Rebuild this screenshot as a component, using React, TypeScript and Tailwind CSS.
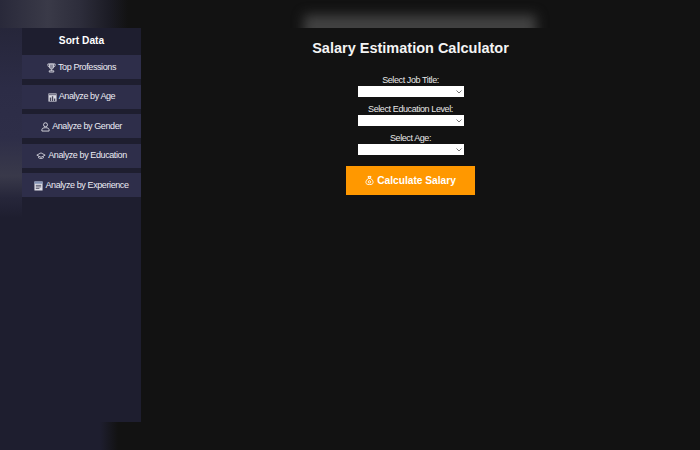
import React from "react";

const Trophy = () => (
  <svg width="9" height="10" viewBox="0 0 10 11" fill="none" stroke="#d4d4dc" strokeWidth="1" className="shrink-0">
    <path d="M1 1h8v1.600A1.600 1.600 0 0 1 7.400 4.200H2.600A1.600 1.600 0 0 1 1 2.600z" />
    <path d="M2.800 1.200h4.400v3.200C7.200 6 6 6.800 5 6.800S2.800 6 2.800 4.400z" fill="#8a8a9c" />
    <path d="M5 7v1.500M2.500 10h5V8.600h-5z" />
  </svg>
);

const Chart = () => (
  <svg width="9" height="9" viewBox="0 0 10 10" className="shrink-0">
    <rect x="0.5" y="0.5" width="9" height="9" fill="#dcdce4" />
    <rect x="1" y="1" width="8" height="1.5" fill="#77778a" />
    <path d="M2 9V5h1.500v4zM4.300 9V3.500h1.500V9zM6.600 9V6h1.500v3z" fill="#44445a" />
  </svg>
);

const Person = () => (
  <svg width="9" height="10" viewBox="0 0 10 11" fill="none" stroke="#dcdce4" strokeWidth="1" className="shrink-0">
    <circle cx="5" cy="3" r="2.2" />
    <path d="M1 10V8.500C1 7 2.500 6.300 5 6.300s4 .7 4 2.200V10z" />
  </svg>
);

const Cap = () => (
  <svg width="10" height="8" viewBox="0 0 11 9" fill="none" stroke="#d0d0da" strokeWidth="1" className="shrink-0">
    <path d="M.8 3.500 5.500 1l4.700 2.500L5.500 6z" />
    <path d="M2.800 5v1.600c.8.900 4.600.900 5.400 0V5" />
  </svg>
);

const Calendar = () => (
  <svg width="9" height="10" viewBox="0 0 10 11" className="shrink-0">
    <rect x="0.5" y="0.5" width="9" height="10" fill="#e0e0e8" />
    <rect x="0.5" y="0.5" width="9" height="2.5" fill="#8392b4" />
    <path d="M2 4.800h6M2 6.500h6M2 8.200h4" stroke="#44445a" strokeWidth="0.9" />
  </svg>
);

const Bag = () => (
  <svg width="9" height="11" viewBox="0 0 10 11" fill="none" stroke="#ffffff" strokeWidth="1" className="shrink-0">
    <path d="M3.400 1h3.200L6 3H4z" />
    <path d="M4 3C2 4.400 1 6 1 7.600 1 9.300 2.400 10 5 10s4-.7 4-2.400C9 6 8 4.400 6 3z" />
    <circle cx="5" cy="7" r="1.3" />
  </svg>
);

const menu = [
  { label: "Top Professions", icon: <Trophy /> },
  { label: "Analyze by Age", icon: <Chart /> },
  { label: "Analyze by Gender", icon: <Person /> },
  { label: "Analyze by Education", icon: <Cap /> },
  { label: "Analyze by Experience", icon: <Calendar /> },
];

const fields = ["Select Job Title:", "Select Education Level:", "Select Age:"];

const App = () => {
  return (
    <div className="h-[450px] w-[700px] overflow-hidden flex flex-col bg-[#121212] font-['Liberation_Sans',Arial,sans-serif] text-white">
      {/* blurred top strip */}
      <div className="h-[28px] shrink-0 flex overflow-hidden">
        <div className="w-[128px] h-full bg-[linear-gradient(90deg,#29293a_0px,#3a3a48_48px,#2d2d3b_80px,#1b1b24_110px,#121212_128px)]" />
        <div className="ml-[176px] mt-[15px] w-[232px] h-[26px] bg-[#424242] blur-[6px]" />
      </div>

      <div className="h-[394px] shrink-0 flex">
        <div className="w-[22px] bg-[linear-gradient(180deg,#26263a_0px,#2c2c46_60px,#2e2e48_110px,#39394a_148px,#26263a_170px,#1e1e2f_190px)]" />
        <aside className="w-[119px] bg-[#1e1e2f] flex flex-col">
          <h2 className="h-[25px] mb-[2px] flex items-center justify-center text-[10.2px] font-bold">Sort Data</h2>
          <div className="flex flex-col gap-[5.5px]">
            {menu.map((m) => (
              <button key={m.label} className="h-[24px] pt-[1px] bg-[#2e2e4a] flex items-center justify-center gap-[2px] text-[9px] tracking-[-0.4px] text-[#ecECF4]">
                {m.icon}
                <span>{m.label}</span>
              </button>
            ))}
          </div>
        </aside>
        <main className="flex-1 pr-[20px] flex flex-col items-center">
          <h1 className="mt-[11px] text-[14.5px] leading-[18px] font-bold text-[#f4f4f4]">Salary Estimation Calculator</h1>
          <form className="mt-[17px] flex flex-col items-center">
            {fields.map((f) => (
              <div key={f} className="flex flex-col items-center mb-[6px]">
                <label className="pt-[1px] text-[9px] tracking-[-0.4px] leading-[11px] text-[#e8e8e8]">{f}</label>
                <div className="relative w-[106px] h-[11px]">
                  <select className="block w-full h-full appearance-none bg-white text-black text-[8px]" />
                  <svg width="6" height="4" viewBox="0 0 6 4" fill="none" stroke="#777777" strokeWidth="1" className="absolute right-[2px] top-[4px] pointer-events-none">
                    <path d="M.5.5 3 3 5.500.5" />
                  </svg>
                </div>
              </div>
            ))}
            <button type="button" className="mt-[5px] w-[129px] h-[29px] bg-[#ff9800] flex items-center justify-center gap-[3px] text-[10.2px] font-bold text-white">
              <Bag />
              Calculate Salary
            </button>
          </form>
        </main>
      </div>

      <div className="flex-1 w-[120px] bg-[linear-gradient(90deg,#1e1e2f_0px,#1e1e2f_100px,#121212_118px)]" />
    </div>
  );
};

export default App;
